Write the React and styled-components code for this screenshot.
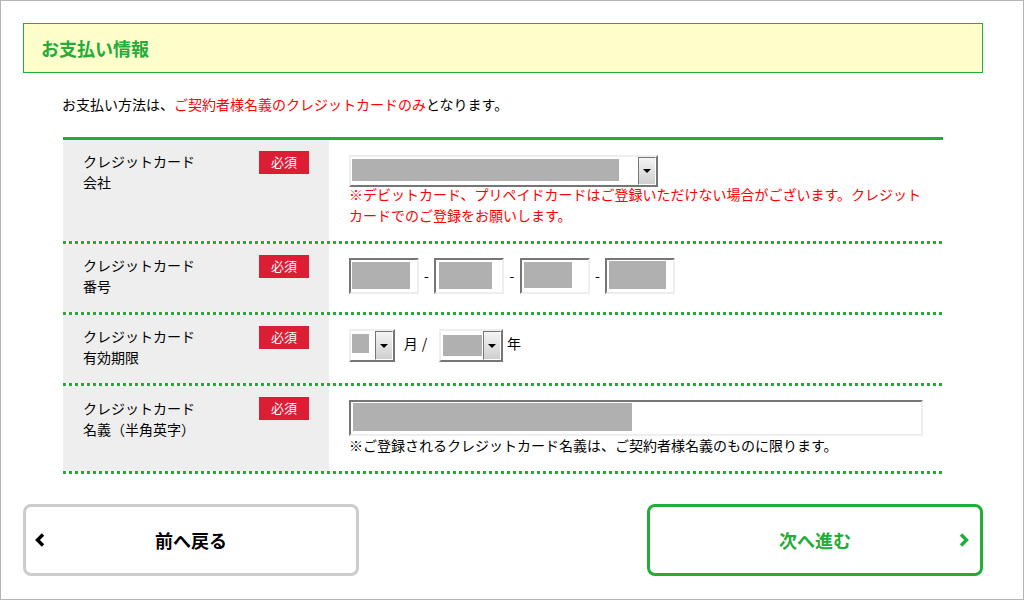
import React from 'react';
import styled, { createGlobalStyle } from 'styled-components';

const green = '#22ac38';

const GlobalStyle = createGlobalStyle`
  html, body {
    margin: 0;
    padding: 0;
    background: #fff;
  }
  body {
    font-family: "Noto Sans CJK JP", "Liberation Sans", sans-serif;
    font-size: 14px;
    color: #000;
  }
`;

const Page = styled.div`
  box-sizing: border-box;
  width: 1024px;
  height: 600px;
  border: 1px solid #b3b3b3;
  padding: 22px 40px 0 22px;
  overflow: hidden;
`;

const Heading = styled.h2`
  box-sizing: border-box;
  margin: 0;
  height: 50px;
  padding-left: 17px;
  border: 1px solid ${green};
  background: #ffffcc;
  color: ${green};
  font-size: 18px;
  font-weight: 700;
  line-height: 48px;
`;

const Intro = styled.p`
  margin: 21px 0 0 39px;
  font-size: 14px;
  line-height: 21px;
`;

const Red = styled.span`
  color: #ff0000;
`;

const Table = styled.div`
  margin: 22px 0 0 40px;
  width: 880px;
  border-top: 3px solid ${green};
`;

const Row = styled.div`
  display: grid;
  grid-template-columns: 266px 1fr;
  height: ${(p) => p.$height}px;
`;

const Divider = styled.div`
  height: 3px;
  background: repeating-linear-gradient(90deg, ${green} 0 3px, transparent 3px 6px);
`;

const Head = styled.div`
  display: flex;
  justify-content: space-between;
  align-items: flex-start;
  background: #eeeeee;
  padding: 11px 20px 0 20px;
`;

const Label = styled.div`
  margin-top: ${(p) => p.$nudge || 0}px;
  line-height: 21px;
`;

const Badge = styled.span`
  width: 50px;
  height: 23px;
  background: #dc1e35;
  color: #fff;
  font-size: 13px;
  line-height: 22px;
  text-align: center;
`;

const Cell = styled.div`
  display: flex;
  flex-direction: column;
  align-items: flex-start;
  padding: ${(p) => p.$top}px 20px 0 20px;
`;

const Inline = styled.div`
  display: flex;
  align-items: center;
`;

const Mask = styled.div`
  flex: none;
  width: ${(p) => p.$w}px;
  height: ${(p) => p.$h}px;
  margin-left: ${(p) => p.$x}px;
  margin-top: ${(p) => p.$y}px;
  background: #b0b0b0;
`;

const Input = styled.div`
  box-sizing: border-box;
  display: flex;
  align-items: flex-start;
  width: ${(p) => p.$w}px;
  height: ${(p) => p.$h}px;
  border-style: solid;
  border-width: 2px;
  border-color: #767676 #eeeeee #eeeeee #767676;
  background: #fff;
`;

const Select = styled.div`
  box-sizing: border-box;
  display: flex;
  align-items: flex-start;
  justify-content: space-between;
  width: ${(p) => p.$w}px;
  height: ${(p) => p.$h}px;
  border-style: solid;
  border-width: 2px;
  border-color: #eeeeee #767676 #767676 #eeeeee;
  background: #fff;
`;

const Arrow = styled.div`
  box-sizing: border-box;
  flex: none;
  align-self: stretch;
  display: flex;
  align-items: center;
  justify-content: center;
  width: 18px;
  border: 1px solid #767676;
  border-right-color: #fff;
  border-bottom-color: #fff;
  background: linear-gradient(#f4f4f4, #cfcfcf);
  &::after {
    content: '';
    border-style: solid;
    border-width: 4px 4px 0 4px;
    border-color: #000 transparent transparent transparent;
  }
`;

const Note = styled.div`
  margin-top: ${(p) => p.$gap || 0}px;
  line-height: 21px;
  color: ${(p) => p.$color || '#000'};
`;

const Sep = styled.span`
  box-sizing: border-box;
  width: ${(p) => p.$w}px;
  padding-bottom: ${(p) => p.$up || 0}px;
  padding-right: ${(p) => p.$back || 0}px;
  text-align: center;
  word-spacing: 1px;
`;

const Buttons = styled.div`
  display: flex;
  justify-content: space-between;
  margin-top: 30px;
`;

const Button = styled.div`
  box-sizing: border-box;
  position: relative;
  display: flex;
  align-items: center;
  justify-content: center;
  width: 336px;
  height: 72px;
  border: 3px solid ${(p) => (p.$next ? green : '#cccccc')};
  border-radius: 8px;
  color: ${(p) => (p.$next ? green : '#000')};
  font-size: 18px;
  font-weight: 700;
`;

const Chevron = styled.svg`
  position: absolute;
  top: 26px;
  ${(p) => (p.$next ? 'right: 11px;' : 'left: 9px;')}
  width: 10px;
  height: 14px;
`;

export default function App() {
  return (
    <Page>
      <GlobalStyle />
      <Heading>お支払い情報</Heading>
      <Intro>
        お支払い方法は、<Red>ご契約者様名義のクレジットカードのみ</Red>となります。
      </Intro>
      <Table>
        <Row $height={101}>
          <Head>
            <Label>クレジットカード<br />会社</Label>
            <Badge>必須</Badge>
          </Head>
          <Cell $top={15}>
            <Select $w={309} $h={32}>
              <Mask $w={267} $h={22} $x={1} $y={2} />
              <Arrow />
            </Select>
            <Note $color="#ff0000" $gap={-3}>
              ※デビットカード、プリペイドカードはご登録いただけない場合がございます。クレジットカードでのご登録をお願いします。
            </Note>
          </Cell>
        </Row>
        <Divider />
        <Row $height={68}>
          <Head>
            <Label>クレジットカード<br />番号</Label>
            <Badge>必須</Badge>
          </Head>
          <Cell $top={14}>
            <Inline>
              <Input $w={70} $h={36}><Mask $w={58} $h={27} $x={1} $y={2} /></Input>
              <Sep $w={15} $up={2}>-</Sep>
              <Input $w={70} $h={36}><Mask $w={53} $h={27} $x={3} $y={2} /></Input>
              <Sep $w={16} $up={2}>-</Sep>
              <Input $w={70} $h={36}><Mask $w={48} $h={26} $x={2} $y={2} /></Input>
              <Sep $w={15} $up={2}>-</Sep>
              <Input $w={70} $h={36}><Mask $w={57} $h={28} $x={2} $y={1} /></Input>
            </Inline>
          </Cell>
        </Row>
        <Divider />
        <Row $height={68}>
          <Head>
            <Label>クレジットカード<br />有効期限</Label>
            <Badge>必須</Badge>
          </Head>
          <Cell $top={14}>
            <Inline>
              <Select $w={46} $h={33}>
                <Mask $w={17} $h={19} $x={1} $y={3} />
                <Arrow />
              </Select>
              <Sep $w={44} $up={6} $back={3}>月 /</Sep>
              <Select $w={64} $h={33}>
                <Mask $w={39} $h={21} $x={2} $y={4} />
                <Arrow />
              </Select>
              <Sep $w={24} $up={6} $back={2}>年</Sep>
            </Inline>
          </Cell>
        </Row>
        <Divider />
        <Row $height={85}>
          <Head>
            <Label $nudge={1}>クレジットカード<br />名義（半角英字）</Label>
            <Badge>必須</Badge>
          </Head>
          <Cell $top={14}>
            <Input $w={574} $h={36}><Mask $w={279} $h={28} $x={2} $y={1} /></Input>
            <Note $gap={-1}>※ご登録されるクレジットカード名義は、ご契約者様名義のものに限ります。</Note>
          </Cell>
        </Row>
        <Divider />
      </Table>
      <Buttons>
        <Button>
          <Chevron viewBox="0 0 10 14">
            <path d="M8 1.5 L2.5 7 L8 12.5" fill="none" stroke="#000" strokeWidth="3.4" />
          </Chevron>
          前へ戻る
        </Button>
        <Button $next>
          次へ進む
          <Chevron $next viewBox="0 0 10 14">
            <path d="M2 1.5 L7.5 7 L2 12.5" fill="none" stroke={green} strokeWidth="3.4" />
          </Chevron>
        </Button>
      </Buttons>
    </Page>
  );
}
